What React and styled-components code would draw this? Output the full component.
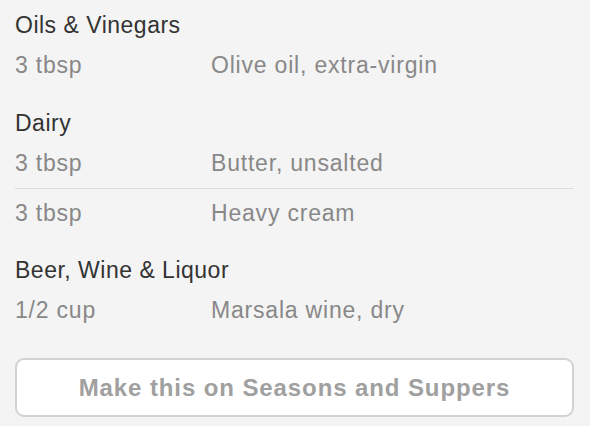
import styled, { createGlobalStyle } from 'styled-components'

const GlobalStyle = createGlobalStyle`
  body {
    margin: 0;
    background-color: #f4f4f4;
    font-family: 'Liberation Sans', Arial, sans-serif;
  }
`

const Page = styled.div`
  display: flex;
  flex-direction: column;
  padding: 11px 16px 9px 15px;
  width: 590px;
  height: 426px;
  box-sizing: border-box;
`

const Section = styled.section`
  display: flex;
  flex-direction: column;
  margin-bottom: 19px;
`

const Heading = styled.h3`
  margin: 0;
  height: 30px;
  line-height: 29px;
  font-size: 23px;
  font-weight: 400;
  letter-spacing: 0.5px;
  color: #333;
`

const Row = styled.div`
  display: grid;
  grid-template-columns: 196px 1fr;
  align-items: center;
  height: 49px;
  box-sizing: border-box;
  font-size: 23px;
  letter-spacing: 0.8px;
  color: #888;

  & + & {
    border-top: 1px solid #dcdcdc;
  }
`

const Button = styled.button`
  margin-top: 4px;
  height: 60px;
  width: 100%;
  border: 2px solid #d2d2d2;
  border-radius: 9px;
  background-color: #fff;
  font-family: 'Liberation Sans', Arial, sans-serif;
  font-size: 24px;
  font-weight: 700;
  letter-spacing: 0.9px;
  color: #a0a0a0;
`

const sections = [
  { title: 'Oils & Vinegars', items: [['3 tbsp', 'Olive oil, extra-virgin']] },
  { title: 'Dairy', items: [['3 tbsp', 'Butter, unsalted'], ['3 tbsp', 'Heavy cream']] },
  { title: 'Beer, Wine & Liquor', items: [['1/2 cup', 'Marsala wine, dry']] },
]

function App() {
  return (
    <Page>
      <GlobalStyle />
      {sections.map((s) => (
        <Section key={s.title}>
          <Heading>{s.title}</Heading>
          {s.items.map(([amount, name]) => (
            <Row key={name}>
              <span>{amount}</span>
              <span>{name}</span>
            </Row>
          ))}
        </Section>
      ))}
      <Button>Make this on Seasons and Suppers</Button>
    </Page>
  )
}

export default App
